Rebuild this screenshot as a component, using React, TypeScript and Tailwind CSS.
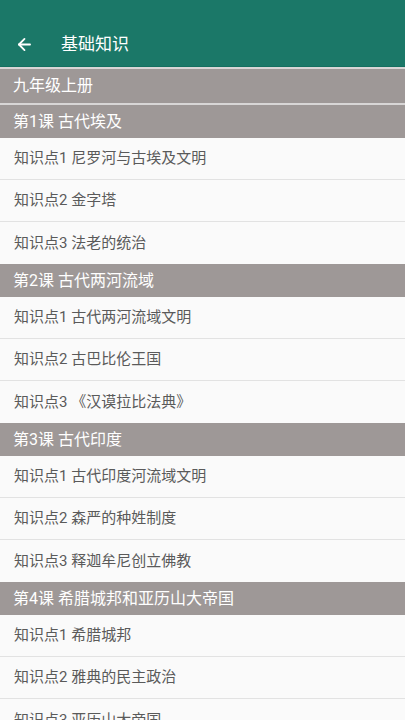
import { ArrowLeft } from 'lucide-react';

const sections = [
  {
    title: '第1课 古代埃及',
    items: ['知识点1 尼罗河与古埃及文明', '知识点2 金字塔', '知识点3 法老的统治'],
  },
  {
    title: '第2课 古代两河流域',
    items: ['知识点1 古代两河流域文明', '知识点2 古巴比伦王国', '知识点3 《汉谟拉比法典》'],
  },
  {
    title: '第3课 古代印度',
    items: ['知识点1 古代印度河流域文明', '知识点2 森严的种姓制度', '知识点3 释迦牟尼创立佛教'],
  },
  {
    title: '第4课 希腊城邦和亚历山大帝国',
    items: ['知识点1 希腊城邦', '知识点2 雅典的民主政治', '知识点3 亚历山大帝国'],
  },
];

export default function App() {
  return (
    <div
      className="w-[405px] h-[720px] overflow-hidden bg-[#fafafa]"
      style={{ fontFamily: 'Roboto, "Noto Sans CJK SC", sans-serif' }}
    >
      <div className="h-[67px] bg-[#1b7868] flex items-center pt-[22px] border-b border-[#147060]">
        <ArrowLeft size={19} strokeWidth={2.3} className="text-white ml-[15px]" />
        <span className="ml-[27px] text-[17px] text-white leading-[28px]">基础知识</span>
      </div>
      <div className="h-[2px] bg-[#d8d6d6]" />
      <div className="h-[34px] bg-[#9e9897] flex items-center px-[13px] text-[16px] text-white">九年级上册</div>
      <div className="h-[2px] bg-[#d8d6d6]" />
      {sections.map((s) => (
        <div key={s.title}>
          <div className="h-[33px] bg-[#9e9897] flex items-center px-[13px] text-[16px] text-white">
            {s.title}
          </div>
          {s.items.map((it, i) => (
            <div
              key={it}
              className={
                'h-[42px] flex items-center px-[14px] text-[15px] text-[#5a5a5a] bg-[#fafafa] ' +
                (i < s.items.length - 1 ? 'border-b border-[#e2e2e2]' : '')
              }
            >
              {it}
            </div>
          ))}
        </div>
      ))}
    </div>
  );
}
